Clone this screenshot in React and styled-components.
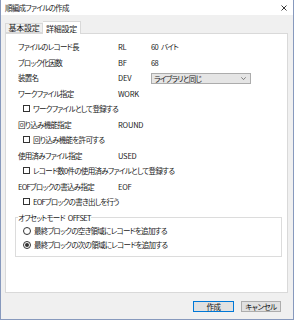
import React, { useState } from "react";
import styled, { createGlobalStyle } from "styled-components";

const GlobalStyle = createGlobalStyle`
  html, body {
    margin: 0;
    padding: 0;
    background: #ffffff;
  }
  body {
    font-family: "Noto Sans CJK JP", "Noto Sans", sans-serif;
    font-feature-settings: "palt";
    font-size: 7.5px;
    letter-spacing: -0.7px;
    word-spacing: 2px;
    color: #1a1a1a;
  }
`;

const Window = styled.div`
  width: 294px;
  height: 320px;
  box-sizing: border-box;
  border: 1px solid #8799bd;
  border-top: none;
  background: #f0f0f0;
  display: flex;
  flex-direction: column;
`;

const TitleBar = styled.div`
  height: 15px;
  background: #ffffff;
  display: flex;
  align-items: center;
  justify-content: space-between;
  padding: 0 4px 0 4px;
  line-height: 15px;
`;

const CloseIcon = styled.svg`
  width: 6px;
  height: 6px;
  margin-right: 2px;
`;

const Body = styled.div`
  flex: 1;
  display: flex;
  flex-direction: column;
  padding: 6px 5px 0 4px;
`;

const TabBar = styled.div`
  display: flex;
  align-items: flex-end;
  height: 12px;
  position: relative;
  z-index: 1;
`;

const Tab = styled.div`
  box-sizing: border-box;
  width: 38px;
  height: ${(p) => (p.$active ? "13px" : "10px")};
  margin-bottom: ${(p) => (p.$active ? "-1px" : "0")};
  border: 1px solid #d9d9d9;
  border-bottom: ${(p) => (p.$active ? "none" : "1px solid #d9d9d9")};
  border-left: ${(p) => (p.$last ? "none" : "1px solid #d9d9d9")};
  background: ${(p) => (p.$active ? "#ffffff" : "#f0f0f0")};
  display: flex;
  align-items: ${(p) => (p.$active ? "flex-start" : "center")};
  justify-content: center;
  font-size: 8px;
  letter-spacing: -0.2px;
  line-height: ${(p) => (p.$active ? "11px" : "8px")};
  padding-top: ${(p) => (p.$active ? "1px" : "0")};
`;

const Panel = styled.div`
  box-sizing: border-box;
  height: 260px;
  background: #ffffff;
  border: 1px solid #d9d9d9;
  padding: 5px 5px 0 9px;
  display: flex;
  flex-direction: column;
`;

const Row = styled.div`
  height: 15.5px;
  display: grid;
  grid-template-columns: 100px 33px 1fr;
  align-items: center;
  padding-left: 3px;
  white-space: nowrap;
`;

const Code = styled.span`
  letter-spacing: -0.2px;
`;

const Select = styled.div`
  box-sizing: border-box;
  width: 100px;
  height: 11px;
  margin-top: 1px;
  background: #e5e5e5;
  border: 1px solid #acacac;
  display: flex;
  align-items: center;
  justify-content: space-between;
  padding: 0 4px 0 2px;
`;

const Chevron = styled.svg`
  width: 5px;
  height: 3px;
`;

const CheckRow = styled.label`
  height: 15.5px;
  display: flex;
  align-items: center;
  gap: 3px;
  padding-left: 8px;
  white-space: nowrap;
`;

const Box = styled.span`
  box-sizing: border-box;
  width: 7px;
  height: 7px;
  border: 1px solid #333;
  background: #fff;
`;

const Group = styled.fieldset`
  margin: 0;
  margin-top: 3px;
  border: 1px solid #dcdcdc;
  padding: 2px 3px 4px 7px;
  display: flex;
  flex-direction: column;
`;

const Legend = styled.legend`
  padding: 0;
  margin-left: -5px;
  line-height: 9px;
`;

const RadioRow = styled.label`
  height: 14px;
  display: flex;
  align-items: center;
  gap: 3px;
  white-space: nowrap;
`;

const Radio = styled.span`
  box-sizing: border-box;
  width: 8px;
  height: 8px;
  border-radius: 50%;
  border: 1px solid #333;
  background: #fff;
  display: flex;
  align-items: center;
  justify-content: center;
  &::after {
    content: "";
    width: 4px;
    height: 4px;
    border-radius: 50%;
    background: ${(p) => (p.$checked ? "#333" : "transparent")};
  }
`;

const Footer = styled.div`
  display: flex;
  justify-content: flex-end;
  gap: 7px;
  padding: 8px 7px 0 0;
`;

const Button = styled.button`
  box-sizing: border-box;
  width: ${(p) => p.$w}px;
  height: 11px;
  padding: 0;
  font: inherit;
  font-size: 7.5px;
  letter-spacing: -0.5px;
  line-height: 9px;
  color: #111;
  background: #e1e1e1;
  border: 1px solid ${(p) => (p.$primary ? "#0078d7" : "#adadad")};
`;

const rows = [
  { type: "field", label: "ファイルのレコード長", code: "RL", value: "60 バイト" },
  { type: "field", label: "ブロック化因数", code: "BF", value: "68" },
  { type: "select", label: "装置名", code: "DEV", value: "ライブラリと同じ" },
  { type: "field", label: "ワークファイル指定", code: "WORK" },
  { type: "check", label: "ワークファイルとして登録する" },
  { type: "field", label: "回り込み機能指定", code: "ROUND" },
  { type: "check", label: "回り込み機能を許可する" },
  { type: "field", label: "使用済みファイル指定", code: "USED" },
  { type: "check", label: "レコード数0件の使用済みファイルとして登録する" },
  { type: "field", label: "EOFブロックの書込み指定", code: "EOF" },
  { type: "check", label: "EOFブロックの書き出しを行う" },
];

const App = () => {
  const [offset, setOffset] = useState(1);

  return (
    <>
      <GlobalStyle />
      <Window>
        <TitleBar>
          <span>順編成ファイルの作成</span>
          <CloseIcon viewBox="0 0 6 6">
            <path d="M0.5 0.5 L5.5 5.5 M5.5 0.5 L0.5 5.5" stroke="#222" strokeWidth="0.9" />
          </CloseIcon>
        </TitleBar>
        <Body>
          <TabBar>
            <Tab>基本設定</Tab>
            <Tab $active $last>詳細設定</Tab>
          </TabBar>
          <Panel>
            {rows.map((r, i) =>
              r.type === "check" ? (
                <CheckRow key={i}>
                  <Box />
                  {r.label}
                </CheckRow>
              ) : (
                <Row key={i}>
                  <span>{r.label}</span>
                  <Code>{r.code}</Code>
                  {r.type === "select" ? (
                    <Select>
                      <span>{r.value}</span>
                      <Chevron viewBox="0 0 5 3">
                        <path d="M0.3 0.3 L2.5 2.6 L4.7 0.3" stroke="#555" strokeWidth="0.7" fill="none" />
                      </Chevron>
                    </Select>
                  ) : (
                    <span>{r.value}</span>
                  )}
                </Row>
              )
            )}
            <Group>
              <Legend>オフセットモード OFFSET</Legend>
              <RadioRow onClick={() => setOffset(0)}>
                <Radio $checked={offset === 0} />
                最終ブロックの空き領域にレコードを追加する
              </RadioRow>
              <RadioRow onClick={() => setOffset(1)}>
                <Radio $checked={offset === 1} />
                最終ブロックの次の領域にレコードを追加する
              </RadioRow>
            </Group>
          </Panel>
          <Footer>
            <Button $primary $w={41}>作成</Button>
            <Button $w={40}>キャンセル</Button>
          </Footer>
        </Body>
      </Window>
    </>
  );
};

export default App;
